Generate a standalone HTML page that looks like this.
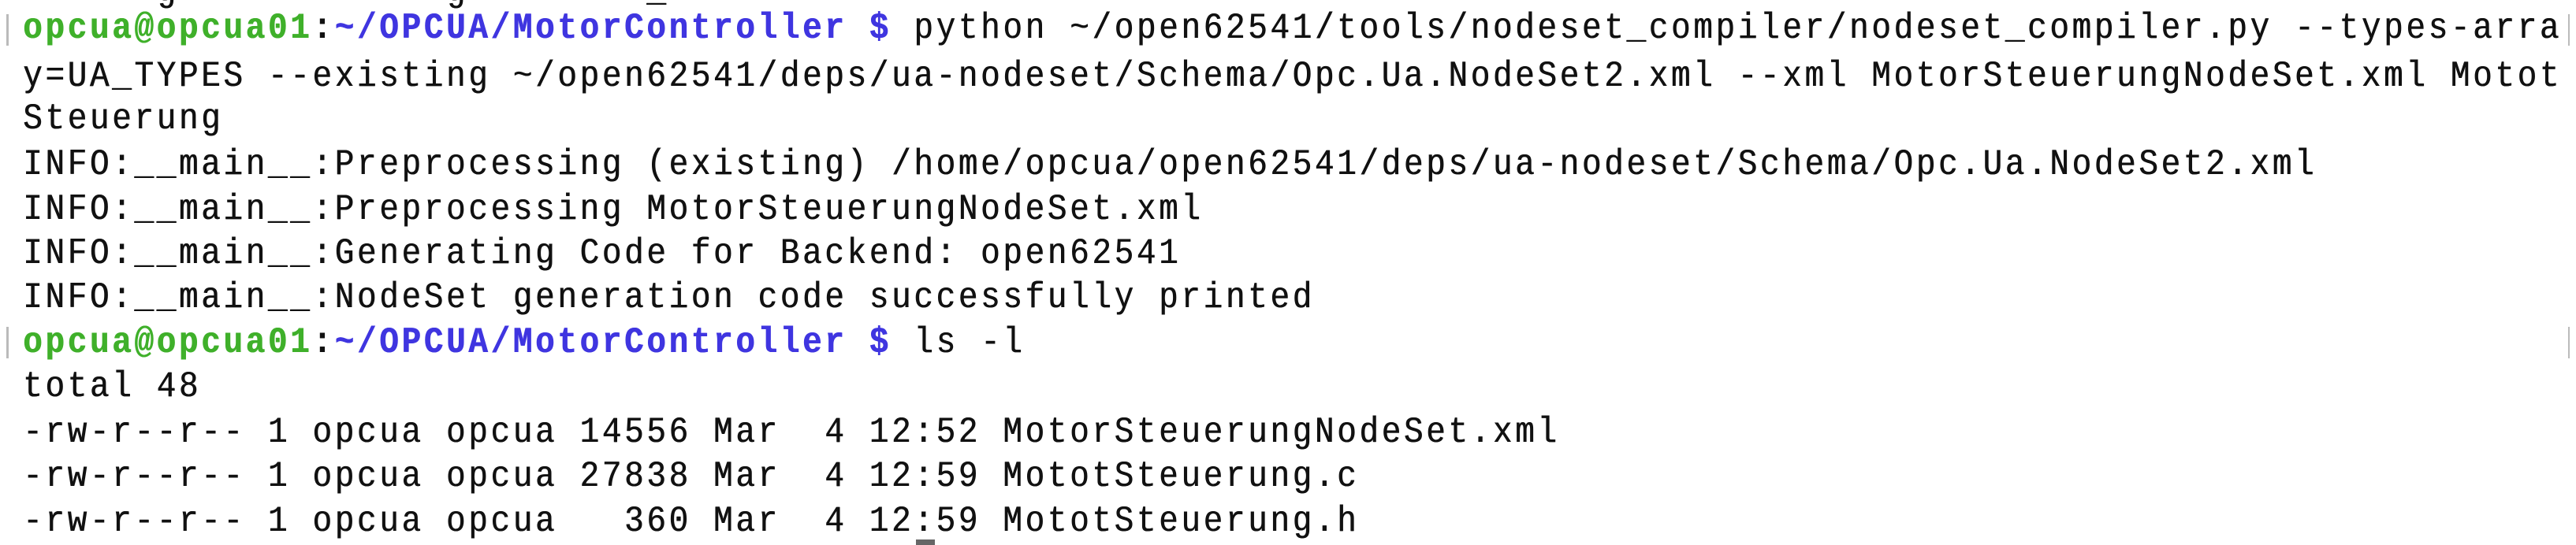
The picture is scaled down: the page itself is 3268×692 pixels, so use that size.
<!DOCTYPE html>
<html><head><meta charset="utf-8"><style>
html,body{margin:0;padding:0;background:#fff;width:3268px;height:692px;overflow:hidden;position:relative}
.l{position:absolute;left:29px;height:57px;line-height:57px;font-family:"Liberation Mono","DejaVu Sans Mono",monospace;font-size:41px;letter-spacing:3.65px;color:#111;white-space:pre;transform:scaleY(1.12);transform-origin:left center;text-shadow:0.6px 0 0 currentColor}
.g{color:#3fb02a;font-weight:bold}
.b{color:#3f35e0;font-weight:bold}
.k{color:#111;font-weight:bold}
.br{position:absolute;width:3px;height:40px;background:#bbb}
</style></head><body>
<div class="l" style="top:-38px">      g            g        _</div>
<div class="l" style="top:9px"><span class="g">opcua@opcua01</span><span class="k">:</span><span class="b">~/OPCUA/MotorController $</span> python ~/open62541/tools/nodeset_compiler/nodeset_compiler.py --types-arra</div>
<div class="l" style="top:70px">y=UA_TYPES --existing ~/open62541/deps/ua-nodeset/Schema/Opc.Ua.NodeSet2.xml --xml MotorSteuerungNodeSet.xml Motot</div>
<div class="l" style="top:124px">Steuerung</div>
<div class="l" style="top:182px">INFO:__main__:Preprocessing (existing) /home/opcua/open62541/deps/ua-nodeset/Schema/Opc.Ua.NodeSet2.xml</div>
<div class="l" style="top:239px">INFO:__main__:Preprocessing MotorSteuerungNodeSet.xml</div>
<div class="l" style="top:295px">INFO:__main__:Generating Code for Backend: open62541</div>
<div class="l" style="top:351px">INFO:__main__:NodeSet generation code successfully printed</div>
<div class="l" style="top:408px"><span class="g">opcua@opcua01</span><span class="k">:</span><span class="b">~/OPCUA/MotorController $</span> ls -l</div>
<div class="l" style="top:464px">total 48</div>
<div class="l" style="top:522px">-rw-r--r-- 1 opcua opcua 14556 Mar  4 12:52 MotorSteuerungNodeSet.xml</div>
<div class="l" style="top:578px">-rw-r--r-- 1 opcua opcua 27838 Mar  4 12:59 MototSteuerung.c</div>
<div class="l" style="top:635px">-rw-r--r-- 1 opcua opcua   360 Mar  4 12:59 MototSteuerung.h</div>
<div class="br" style="left:8px;top:18px"></div>
<div class="br" style="left:8px;top:415px"></div>
<div class="br" style="left:3258px;top:18px;width:2px"></div>
<div class="br" style="left:3258px;top:415px;width:2px"></div>
<div style="position:absolute;left:1162px;top:685px;width:24px;height:7px;background:#666"></div>
</body></html>
